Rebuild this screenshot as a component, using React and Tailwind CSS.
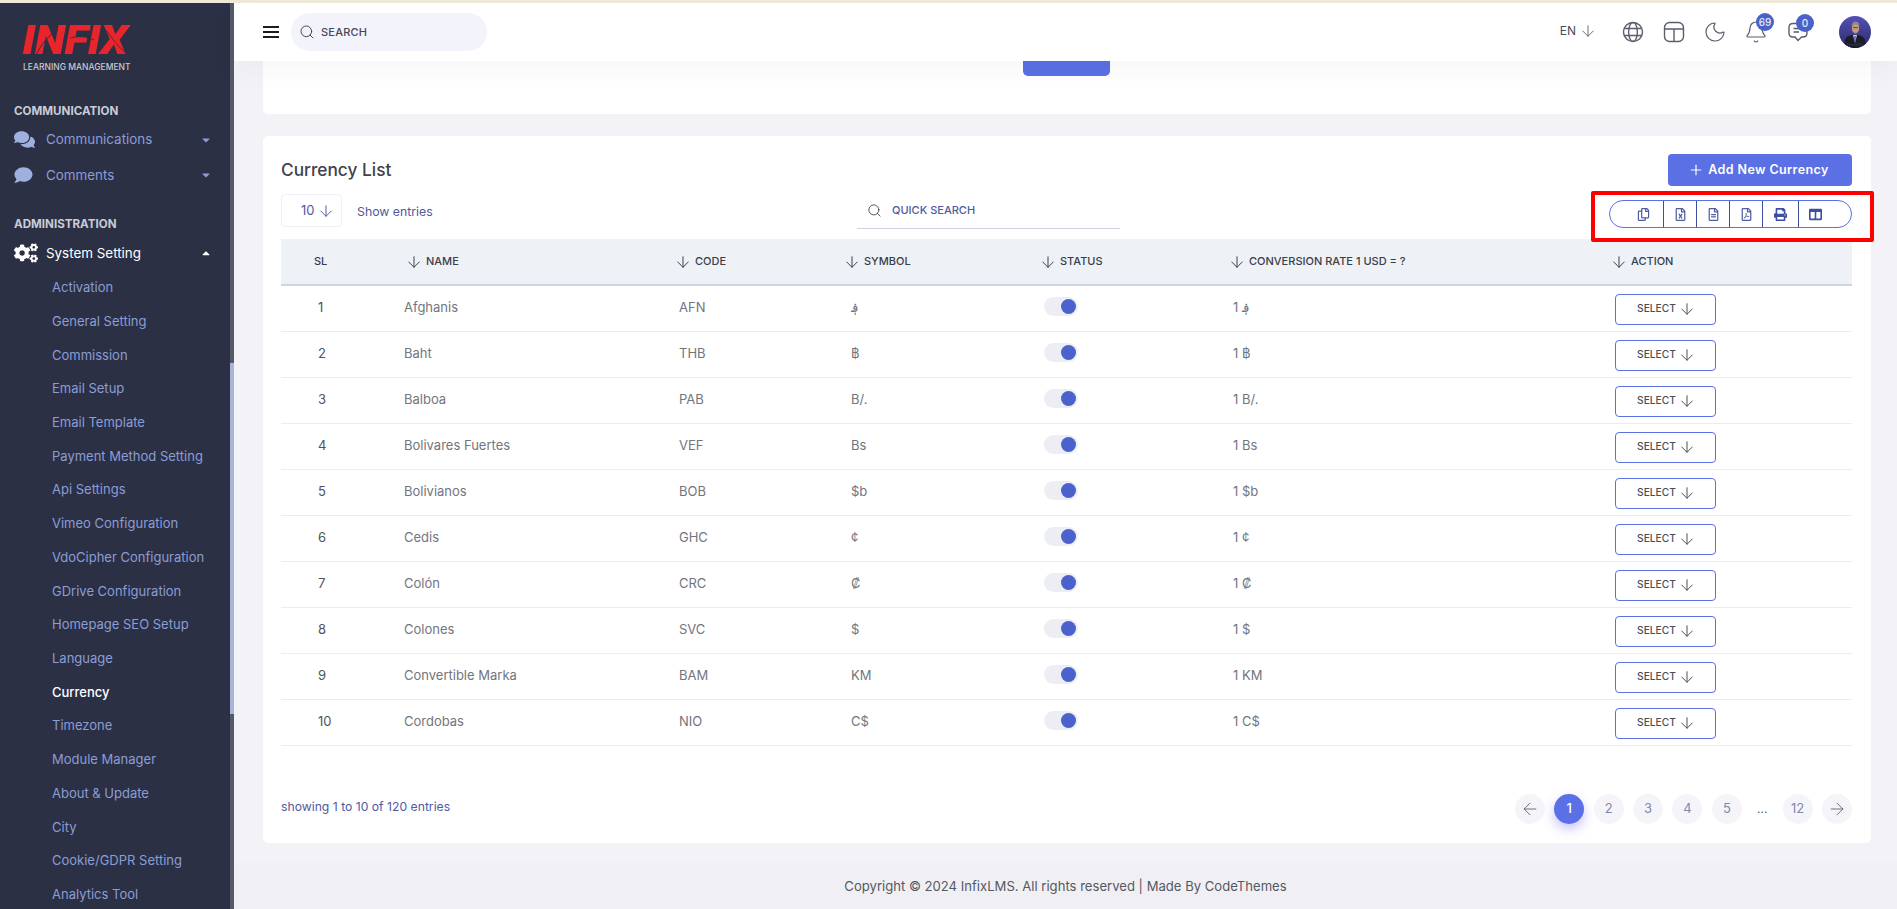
import React from "react";
import { ArrowDown, ArrowLeft, ArrowRight, Bell, Moon, Plus, Search } from "lucide-react";
import {
  FaCaretDown,
  FaCaretUp,
  FaCogs,
  FaColumns,
  FaComment,
  FaComments,
  FaPrint,
  FaRegCopy,
  FaRegFileAlt,
  FaRegFileExcel,
  FaRegFilePdf,
} from "react-icons/fa";

const subMenu = [
  "Activation",
  "General Setting",
  "Commission",
  "Email Setup",
  "Email Template",
  "Payment Method Setting",
  "Api Settings",
  "Vimeo Configuration",
  "VdoCipher Configuration",
  "GDrive Configuration",
  "Homepage SEO Setup",
  "Language",
  "Currency",
  "Timezone",
  "Module Manager",
  "About & Update",
  "City",
  "Cookie/GDPR Setting",
  "Analytics Tool",
];

const currencies = [
  ["Afghanis", "AFN", "؋"],
  ["Baht", "THB", "฿"],
  ["Balboa", "PAB", "B/."],
  ["Bolivares Fuertes", "VEF", "Bs"],
  ["Bolivianos", "BOB", "$b"],
  ["Cedis", "GHC", "¢"],
  ["Colón", "CRC", "₡"],
  ["Colones", "SVC", "$"],
  ["Convertible Marka", "BAM", "KM"],
  ["Cordobas", "NIO", "C$"],
];

function Logo() {
  return (
    <div className="h-[97px] pl-[22px] pt-[22px]">
      <div className="relative h-[31px] w-[106px]">
        <span className="block origin-left scale-x-[1.11] font-['Roboto',sans-serif] text-[40px] font-black italic leading-[31px] tracking-[-0.5px] text-[#e8252b]">
          INFIX
        </span>
        <svg className="absolute left-0 top-0" width="106" height="31" viewBox="0 0 106 31" fill="none">
          <path d="M14 30 C 20 18 26 11 36 5" stroke="#2b3044" strokeWidth="1" />
          <path d="M48 13 C 56 11 64 11 72 15" stroke="#2b3044" strokeWidth="0.8" />
          <path d="M84 5 C 90 13 96 22 104 28" stroke="#2b3044" strokeWidth="0.8" />
        </svg>
      </div>
      <div className="mt-[6px] whitespace-nowrap pl-[1px] text-[8.5px] font-medium leading-[10px] text-[#c7cad3]">LEARNING MANAGEMENT</div>
    </div>
  );
}

function Sidebar() {
  return (
    <aside className="flex h-full w-[234px] shrink-0 overflow-hidden bg-[#2b3044]">
      <div className="w-[230px] shrink-0">
        <Logo />
        <div className="flex h-[22px] items-center pl-[14px] pt-[2px] text-[11.6px] font-bold text-[#c9ccd6]">COMMUNICATION</div>
        <div className="flex h-[35px] items-center pl-[14px] pr-[18px] text-[13.4px] text-[#8b9dd6]">
          <FaComments className="h-[19px] w-[21px] text-[#9fb0df]" />
          <span className="ml-[11px] flex-1">Communications</span>
          <FaCaretDown className="h-[12px] w-[12px]" />
        </div>
        <div className="flex h-[36px] items-center pl-[14px] pr-[18px] text-[13.4px] text-[#8b9dd6]">
          <FaComment className="h-[18px] w-[19px] text-[#9fb0df]" />
          <span className="ml-[13px] flex-1">Comments</span>
          <FaCaretDown className="h-[12px] w-[12px]" />
        </div>
        <div className="mt-[20px] flex h-[22px] items-center pl-[14px] pt-[2px] text-[11.6px] font-bold text-[#c9ccd6]">ADMINISTRATION</div>
        <div className="flex h-[36px] items-center pl-[14px] pr-[18px] text-[13.4px] text-white">
          <FaCogs className="h-[20px] w-[24px]" />
          <span className="ml-[8px] flex-1">System Setting</span>
          <FaCaretUp className="h-[12px] w-[12px]" />
        </div>
        {subMenu.map((item) => (
          <div
            key={item}
            className={`flex h-[33.73px] items-center whitespace-nowrap pl-[52px] text-[13px] ${
              item === "Currency" ? "font-medium text-white" : "text-[#8b9dd6]"
            }`}
          >
            {item}
          </div>
        ))}
      </div>
      <div className="h-full w-[4px] bg-[#555a6a]">
        <div className="mt-[360px] h-[351px] w-full bg-[#a9b4d6]" />
      </div>
    </aside>
  );
}

function Badge({ children }) {
  return (
    <span className="absolute right-[-6px] top-[-7px] flex h-[18px] w-[18px] items-center justify-center rounded-full bg-[#4a62c8] text-[10px] font-medium text-[#e6e9f8]">
      {children}
    </span>
  );
}

function Avatar() {
  return (
    <svg width="32" height="32" viewBox="0 0 32 32" className="rounded-full">
      <defs>
        <linearGradient id="avatarBg" x1="0" y1="0" x2="0" y2="1">
          <stop offset="0" stopColor="#5550b8" />
          <stop offset="1" stopColor="#2e2a66" />
        </linearGradient>
      </defs>
      <rect width="32" height="32" fill="url(#avatarBg)" />
      <path d="M5 32 L6 24 Q7 20 13 19 L19 19 Q25 20 26 24 L28 32 Z" fill="#1b1d2a" />
      <path d="M14 19 L16 27 L18 19 Z" fill="#cfd3e0" />
      <path d="M15.4 20 L16.6 20 L16.4 27 L15.6 27 Z" fill="#2c3d7a" />
      <ellipse cx="16.5" cy="12.5" rx="3.6" ry="5" fill="#c69a80" />
      <path d="M12.7 11 Q12.6 5.6 17 5.6 Q20.8 5.8 20.2 11 Q19 8.4 16.5 8.6 Q14 8.6 12.7 11 Z" fill="#8b8a8d" />
      <path d="M14.2 11.6 H18.8" stroke="#2a2a2a" strokeWidth="0.7" />
      <path d="M14.8 15.8 Q16.5 17.6 18.2 15.8 L17.8 17.4 H15.2 Z" fill="#8d8480" />
      <path d="M7 27 L14 28 L19 26 L25 28 L24 30 L8 30 Z" fill="#262938" />
    </svg>
  );
}

function Header() {
  return (
    <header className="relative z-10 flex h-[58px] shrink-0 items-center bg-white pl-[29px] pr-[26px] shadow-[0_10px_30px_rgba(0,0,0,0.035)]">
      <div className="flex w-[16px] flex-col gap-[3px]">
        <span className="h-[2px] bg-[#1c1c22]" />
        <span className="h-[2px] bg-[#1c1c22]" />
        <span className="h-[2px] bg-[#1c1c22]" />
      </div>
      <div className="ml-[12px] flex h-[38px] w-[196px] items-center rounded-full bg-[#f3f3fb] pl-[8px]">
        <Search className="h-[16px] w-[16px] text-[#3d3d48]" strokeWidth={1.4} />
        <span className="ml-[6px] text-[11px] font-medium tracking-[0.2px] text-[#474753]">SEARCH</span>
      </div>
      <div className="ml-auto flex items-center text-[#5a5e6e]">
        <span className="mb-[2px] text-[12px] text-[#4a4d59]">EN</span>
        <ArrowDown className="mb-[2px] ml-[3px] h-[18px] w-[18px]" strokeWidth={1.2} />
        <svg className="ml-[25px]" width="22" height="22" viewBox="0 0 22 22" fill="none" stroke="currentColor" strokeWidth="1.4">
          <circle cx="11" cy="11" r="9.5" />
          <ellipse cx="11" cy="11" rx="4.4" ry="9.5" />
          <path d="M2.4 7.5 H19.6 M2.4 14.5 H19.6" />
        </svg>
        <svg className="ml-[19px]" width="22" height="22" viewBox="0 0 22 22" fill="none" stroke="currentColor" strokeWidth="1.4">
          <rect x="1.5" y="1.5" width="19" height="19" rx="5" />
          <path d="M1.5 8 H20.5 M11 8 V20.5" />
        </svg>
        <Moon className="ml-[18px] h-[24px] w-[24px]" strokeWidth={1.2} />
        <div className="relative ml-[17px] h-[24px] w-[24px]">
          <Bell className="h-[24px] w-[24px]" strokeWidth={1.2} />
          <Badge>69</Badge>
        </div>
        <div className="relative ml-[20px] h-[22px] w-[20px]">
          <svg width="20" height="22" viewBox="0 0 20 22" fill="none" stroke="currentColor" strokeWidth="1.4">
            <path d="M5 2.5 H15 Q19 2.5 19 6.5 V12 Q19 16 15 16 H13.5 L10 19.5 L7 16 H5 Q1 16 1 12 V6.5 Q1 2.5 5 2.5 Z" />
            <path d="M5.5 7.5 H14.5 M5.5 11 H11" />
          </svg>
          <Badge>0</Badge>
        </div>
        <div className="ml-[31px] h-[32px] w-[32px]">
          <Avatar />
        </div>
      </div>
    </header>
  );
}

function ExportButtons() {
  const cell = "flex h-full items-center justify-center border-l border-[#3f4f9f] text-[#4d5c9f]";
  return (
    <div className="mt-[6px] flex h-[28px] w-[243px] items-center overflow-hidden rounded-full border border-[#5a70e4]">
      <div className="flex h-full w-[53px] items-center justify-end pr-[13px] text-[#4d5c9f]">
        <FaRegCopy className="h-[13px] w-[13px]" />
      </div>
      <div className={`${cell} w-[33px]`}>
        <FaRegFileExcel className="h-[13px] w-[11px]" />
      </div>
      <div className={`${cell} w-[33px]`}>
        <FaRegFileAlt className="h-[13px] w-[11px]" />
      </div>
      <div className={`${cell} w-[33px]`}>
        <FaRegFilePdf className="h-[13px] w-[11px]" />
      </div>
      <div className={`${cell} w-[36px]`}>
        <FaPrint className="h-[13px] w-[13px] text-[#3f4f9f]" />
      </div>
      <div className="flex h-full flex-1 items-center border-l border-[#3f4f9f] pl-[10px] text-[#3f4f9f]">
        <FaColumns className="h-[13px] w-[13px]" />
      </div>
    </div>
  );
}

function Sorted({ children }) {
  return (
    <span className="-ml-[4px] flex items-center gap-[3px]">
      <ArrowDown className="h-[18px] w-[18px] text-[#3a3d4a]" strokeWidth={1.3} />
      {children}
    </span>
  );
}

function CurrencyTable() {
  return (
    <div>
      <div className="grid h-[47px] grid-cols-[128px_269px_169px_196px_189px_382px_238px] items-center border-b-2 border-[#cdd4e6] bg-[#eef1f6] text-[11px] font-medium text-[#3a3d4a]">
        <span className="pl-[33px]">SL</span>
        <Sorted>NAME</Sorted>
        <Sorted>CODE</Sorted>
        <Sorted>SYMBOL</Sorted>
        <Sorted>STATUS</Sorted>
        <Sorted>CONVERSION RATE 1 USD = ?</Sorted>
        <Sorted>ACTION</Sorted>
      </div>
      {currencies.map(([name, code, symbol], i) => (
        <div
          key={code}
          className="grid h-[46px] grid-cols-[124px_275px_171px_193px_189px_382px_237px] items-center border-b border-[#ebedf4] text-[13px] text-[#72757e]"
        >
          <span className="mb-[1px] pl-[37px] text-[#50535c]">{i + 1}</span>
          <span className="-ml-[1px] mb-[1px]">{name}</span>
          <span className="-ml-[1px] mb-[1px]">{code}</span>
          <span className="mb-[1px]">{symbol}</span>
          <div className="mb-[5px] flex h-[19px] w-[34px] items-center justify-end rounded-full bg-[#eceef4] pr-[2px]">
            <span className="h-[15px] w-[15px] rounded-full bg-[#4b62cc]" />
          </div>
          <span className="mb-[1px]">1 {symbol}</span>
          <div className="mt-[1px] flex h-[31px] w-[101px] items-center justify-center gap-[2px] rounded-[4px] border border-[#5a70e4] pl-[2px] text-[10.2px] font-medium text-[#4a4d59]">
            SELECT
            <ArrowDown className="h-[18px] w-[18px]" strokeWidth={1.3} />
          </div>
        </div>
      ))}
    </div>
  );
}

function Pagination() {
  const circle = "flex h-[30px] w-[30px] items-center justify-center rounded-full bg-[#f5f5f9] text-[13px] text-[#8187ad]";
  return (
    <div className="flex items-center gap-[9.4px]">
      <span className={`${circle} text-[#55575f]`}>
        <ArrowLeft className="h-[20px] w-[20px]" strokeWidth={1} />
      </span>
      <span className="flex h-[30px] w-[30px] items-center justify-center rounded-full bg-[#5a70e4] text-[13px] font-medium text-white shadow-[0_5px_12px_rgba(90,80,240,0.35)]">
        1
      </span>
      {["2", "3", "4", "5"].map((n) => (
        <span key={n} className={circle}>
          {n}
        </span>
      ))}
      <span className="w-[22px] text-center text-[12px] text-[#5a6090]">...</span>
      <span className={circle}>12</span>
      <span className={`${circle} text-[#55575f]`}>
        <ArrowRight className="h-[20px] w-[20px]" strokeWidth={1} />
      </span>
    </div>
  );
}

export default function App() {
  return (
    <div className="flex h-screen flex-col overflow-hidden bg-[#f3f3f7] font-['Inter',sans-serif]">
      <div className="h-[3px] shrink-0 bg-[#efe9d8]" />
      <div className="flex min-h-0 flex-1">
        <Sidebar />
        <main className="flex min-w-0 flex-1 flex-col">
          <Header />
          <div className="flex flex-1 flex-col pl-[29px] pr-[26px]">
            <div className="flex h-[53px] justify-center rounded-b-[5px] bg-white pr-[2px]">
              <div className="h-[15px] w-[87px] rounded-b-[5px] bg-[#5a70e4]" />
            </div>
            <section className="relative mt-[22px] h-[707px] rounded-[5px] bg-white pl-[18px] pr-[19px] pt-[18px]">
              <div className="flex h-[32px] items-center justify-between">
                <h2 className="text-[17.3px] font-medium text-[#3f424c]">Currency List</h2>
                <div className="flex h-[32px] w-[184px] items-center justify-center gap-[4px] rounded-[4px] bg-[#5a70e4] pr-[3px] text-[12.5px] font-semibold tracking-[0.4px] text-white">
                  <Plus className="h-[16px] w-[16px]" strokeWidth={1.8} />
                  Add New Currency
                </div>
              </div>
              <div className="mt-[8px] grid h-[45px] grid-cols-[576px_263px_1fr] items-start">
                <div className="flex items-center">
                  <div className="flex h-[33px] w-[61px] items-center rounded-[4px] border border-[#eef0f6] pl-[19px] text-[13px] text-[#4f5aa0]">
                    10
                    <ArrowDown className="ml-[2px] h-[18px] w-[18px]" strokeWidth={1.3} />
                  </div>
                  <span className="ml-[15px] mt-[4px] text-[12.3px] text-[#4f5aa0]">Show entries</span>
                </div>
                <div className="flex h-[35px] items-center border-b border-[#cfd0e2] pb-[2px] pl-[10px]">
                  <Search className="h-[15px] w-[15px] text-[#444]" strokeWidth={1.4} />
                  <span className="ml-[10px] text-[11px] font-medium text-[#4f5aa0]">QUICK SEARCH</span>
                </div>
                <div className="flex justify-end">
                  <ExportButtons />
                </div>
              </div>
              <CurrencyTable />
              <div className="mt-[48px] flex items-center justify-between">
                <span className="mb-[3px] text-[12.2px] text-[#4f5aa0]">showing 1 to 10 of 120 entries</span>
                <Pagination />
              </div>
              <div className="absolute left-[1328px] top-[55px] h-[51px] w-[283px] rounded-[2px] border-4 border-[#ff0000]" />
            </section>
            <footer className="mx-[-29px] mr-[-26px] mt-[20px] flex h-[46px] items-center justify-center bg-[#f0f0f4] pt-[2px] text-[13.1px] text-[#555863]">
              Copyright © 2024 InfixLMS. All rights reserved | Made By CodeThemes
            </footer>
          </div>
        </main>
      </div>
    </div>
  );
}
